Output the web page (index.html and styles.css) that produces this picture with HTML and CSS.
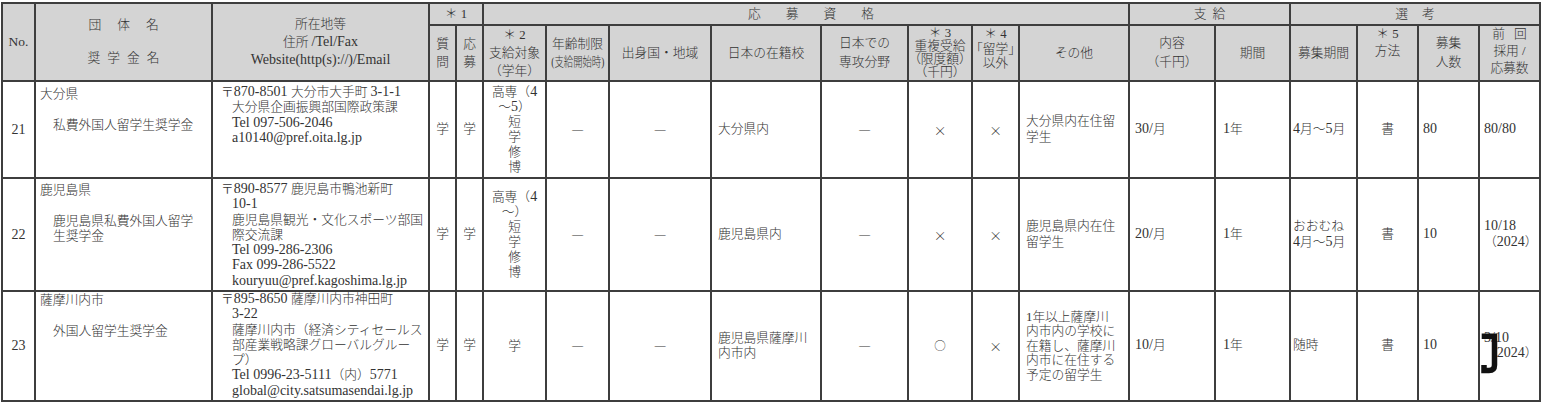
FILE: index.html
```html
<!DOCTYPE html>
<html lang="ja">
<head>
<meta charset="utf-8">
<title>奨学金一覧</title>
<link rel="stylesheet" href="styles.css">
</head>
<body>
<table class="tbl">
<colgroup>
<col class="c-no"><col class="c-org"><col class="c-addr"><col class="c-q"><col class="c-q"><col class="c-tgt"><col class="c-age"><col class="c-ctry"><col class="c-sch"><col class="c-maj"><col class="c-dup"><col class="c-oth4"><col class="c-etc"><col class="c-amt"><col class="c-per"><col class="c-rec"><col class="c-met"><col class="c-num"><col class="c-prev">
</colgroup>
<thead>
<tr class="h1">
<th rowspan="2" class="hno">No.</th>
<th rowspan="2" class="horg">団<i class="g16"></i>体<i class="g16"></i>名<br>奨<i class="g7"></i>学<i class="g7"></i>金<i class="g7"></i>名</th>
<th rowspan="2" class="haddr">所在地等<br>住所 <span class="e">/Tel/Fax</span><br><span class="e">Website(http(s)://)/Email</span></th>
<th colspan="2">＊ 1</th>
<th colspan="8" class="hq">応<i class="g25"></i>募<i class="g25"></i>資<i class="g25"></i>格</th>
<th colspan="2">支<i class="g6"></i>給</th>
<th colspan="4">選<i class="g14"></i>考</th>
</tr>
<tr class="h2">
<th>質<br>問</th>
<th>応<br>募</th>
<th class="lh18"><div class="wide">＊ 2<br>支給対象<br>（学年）</div></th>
<th>年齢制限<br><span class="sm">(支給開始時)</span></th>
<th>出身国・地域</th>
<th>日本の在籍校</th>
<th class="lh19">日本での<br>専攻分野</th>
<th class="top h3"><div class="wide">＊ 3<br>重複受給<br>（限度額）<br>（千円）</div></th>
<th class="top h4"><div class="wide">＊ 4<br>「留学」<br>以外</div></th>
<th>その他</th>
<th class="lh19">内容<br>（千円）</th>
<th>期間</th>
<th>募集期間</th>
<th class="top h5">＊ 5<br>方法</th>
<th class="lh19">募集<br>人数</th>
<th class="top h5">前<i class="g9"></i>回<br>採用 /<br>応募数</th>
</tr>
</thead>
<tbody>
<tr class="r21">
<td class="no">21</td>
<td class="org">大分県<div class="nm">私費外国人留学生奨学金</div></td>
<td class="addr">〒<span class="e">870-8501 </span>大分市大手町 <span class="e">3-1-1</span><br>大分県企画振興部国際政策課<br><span class="e">Tel 097-506-2046</span><br><span class="e">a10140@pref.oita.lg.jp</span></td>
<td>学</td><td>学</td>
<td class="tgt">高専（<span class="e">4</span><br>～<span class="e">5</span>）<br>短<br>学<br>修<br>博</td>
<td class="cj">―</td><td class="cj">―</td>
<td class="lf">大分県内</td>
<td class="cj">―</td>
<td class="cj">×</td><td class="cj">×</td>
<td class="lf">大分県内在住留<br>学生</td>
<td class="amt"><span class="e">30/</span>月</td>
<td class="per"><span class="e">1</span>年</td>
<td class="rec"><span class="e">4</span>月～<span class="e">5</span>月</td>
<td>書</td>
<td class="num"><span class="e">80</span></td>
<td class="num"><span class="e">80/80</span></td>
</tr>
<tr class="r22">
<td class="no">22</td>
<td class="org">鹿児島県<div class="nm">鹿児島県私費外国人留学<br>生奨学金</div></td>
<td class="addr">〒<span class="e">890-8577 </span>鹿児島市鴨池新町<br><span class="e">10-1</span><br>鹿児島県観光・文化スポーツ部国<br>際交流課<br><span class="e">Tel 099-286-2306</span><br><span class="e">Fax 099-286-5522</span><br><span class="e">kouryuu@pref.kagoshima.lg.jp</span></td>
<td>学</td><td>学</td>
<td class="tgt">高専（<span class="e">4</span><br>～）<br>短<br>学<br>修<br>博</td>
<td class="cj">―</td><td class="cj">―</td>
<td class="lf">鹿児島県内</td>
<td class="cj">―</td>
<td class="cj">×</td><td class="cj">×</td>
<td class="lf">鹿児島県内在住<br>留学生</td>
<td class="amt"><span class="e">20/</span>月</td>
<td class="per"><span class="e">1</span>年</td>
<td class="rec">おおむね<br><span class="e">4</span>月～<span class="e">5</span>月</td>
<td>書</td>
<td class="num"><span class="e">10</span></td>
<td class="num"><span class="e">10/18</span><br>（<span class="e">2024</span>）</td>
</tr>
<tr class="r23">
<td class="no">23</td>
<td class="org">薩摩川内市<div class="nm">外国人留学生奨学金</div></td>
<td class="addr">〒<span class="e">895-8650 </span>薩摩川内市神田町<br><span class="e">3-22</span><br>薩摩川内市（経済シティセールス<br>部産業戦略課グローバルグルー<br>プ）<br><span class="e">Tel 0996-23-5111</span>（内）<span class="e">5771</span><br><span class="e">global@city.satsumasendai.lg.jp</span></td>
<td>学</td><td>学</td>
<td class="tgt">学</td>
<td class="cj">―</td><td class="cj">―</td>
<td class="lf">鹿児島県薩摩川<br>内市内</td>
<td class="cj">―</td>
<td class="cj circ">○</td><td class="cj">×</td>
<td class="lf lh145">1年以上薩摩川<br>内市内の学校に<br>在籍し、薩摩川<br>内市に在住する<br>予定の留学生</td>
<td class="amt"><span class="e">10/</span>月</td>
<td class="per"><span class="e">1</span>年</td>
<td class="rec">随時</td>
<td>書</td>
<td class="num"><span class="e">10</span></td>
<td class="num"><span class="e">3/10</span><br>（<span class="e">2024</span>）</td>
</tr>
</tbody>
</table>
<svg class="mark" width="24" height="44" viewBox="0 0 24 44" aria-hidden="true"><path d="M2.7 5.3 H15.5 V34 Q15.5 39.5 10 39.5 H5 V34" fill="none" stroke="#111" stroke-width="5.5"/></svg>
</body>
</html>
```

FILE: styles.css
```css
* { box-sizing: border-box; }
html { background: #fff; }
body {
  margin: 0;
  padding: 2px 0 0 1px;
  position: relative;
  font-family: "Liberation Serif", "Noto Sans CJK JP", serif;
  font-size: 12.75px;
  font-weight: 300;
  color: #333;
}
.tbl { border-collapse: collapse; table-layout: fixed; width: 1540px; }
.c-no { width: 33px; }
.c-org { width: 177px; }
.c-addr { width: 217px; }
.c-q { width: 27px; }
.c-tgt { width: 63px; }
.c-age { width: 63px; }
.c-ctry { width: 102px; }
.c-sch { width: 110px; }
.c-maj { width: 87px; }
.c-dup { width: 64px; }
.c-oth4 { width: 47px; }
.c-etc { width: 110px; }
.c-amt { width: 86px; }
.c-per { width: 75px; }
.c-rec { width: 67px; }
.c-met { width: 61px; }
.c-num { width: 61px; }
.c-prev { width: 61px; }

th, td {
  border: 2px solid #3e3e3e;
  padding: 0;
  font-weight: 300;
  text-align: center;
  vertical-align: middle;
}
th { background: #d4d4d4; line-height: 18px; }
td { background: #fff; line-height: 15.3px; }

.h1 th { height: 22px; }
.h2 th { height: 55px; }
.r21 td { height: 97px; }
.r22 td { height: 113px; }
.r23 td { height: 110px; }

.e { font-size: 14px; line-height: 1; }
.g6, .g7, .g9, .g14, .g16, .g25 { display: inline-block; }
.g6 { width: 6px; }
.g7 { width: 7px; }
.g9 { width: 9px; }
.g14 { width: 14px; }
.g16 { width: 16px; }
.g25 { width: 25px; }

.hno { font-size: 13.5px; }
.horg { line-height: 33px; }
.hq { padding-left: 10px; }
.wide { margin: 0 -8px; white-space: nowrap; }
.lh18 { line-height: 18px; }
.lh19 { line-height: 19px; }
.top { vertical-align: top; }
.h3 { line-height: 13px; padding-top: 1px; }
.h4 { line-height: 14.5px; padding-top: 1px; }
.h5 { line-height: 17px; padding-top: 0; }
.sm {
  display: inline-block;
  font-size: 13px;
  line-height: 1;
  transform: scaleX(0.72);
  margin: 0 -10px;
  white-space: nowrap;
}

.no { font-size: 14px; }
.org { vertical-align: top; text-align: left; padding: 5px 4px 0; }
.org .nm { margin: 15.3px 0 0 13px; }
.r22 .org { padding-top: 4px; }
.r23 .org { padding-top: 1px; }
.addr {
  vertical-align: top;
  text-align: left;
  white-space: nowrap;
  padding: 3px 0 0 19px;
  text-indent: -11px;
}
.r23 .addr { padding-top: 0; }
.tgt { line-height: 15px; }
.cj { font-family: "Noto Sans CJK JP", sans-serif; }
.circ { font-size: 11.5px; }
.lf { text-align: left; padding-left: 6px; }
.lh145 { line-height: 14.5px; }
.amt { text-align: left; padding-left: 5px; }
.per { text-align: left; padding-left: 7px; }
.rec { text-align: left; padding-left: 2px; }
.num { text-align: left; padding-left: 4px; }

.mark { position: absolute; left: 1479px; top: 331px; }
```
